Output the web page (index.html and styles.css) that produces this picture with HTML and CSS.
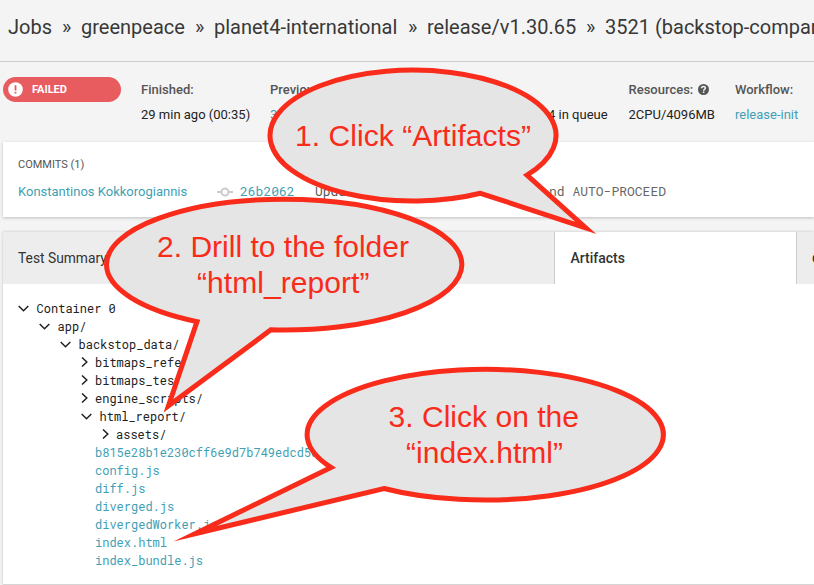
FILE: index.html
```
<!DOCTYPE html>
<html lang="en">
<head>
<meta charset="utf-8">
<title>Job 3521</title>
<link rel="stylesheet" href="styles.css">
</head>
<body>
<nav class="crumbs">
  <span class="c-jobs">Jobs</span><span class="sep">»</span><span class="c-org">greenpeace</span><span class="sep">»</span><span class="c-repo">planet4-international</span><span class="sep">»</span><span class="c-branch">release/v1.30.65</span><span class="sep">»</span><span class="c-build">3521 (backstop-compare)</span>
</nav>
<section class="summary">
  <div class="badge">
    <svg width="15" height="15" viewBox="0 0 15 15"><circle cx="7.5" cy="7.5" r="7.3" fill="#fff"/><path d="M7.5 3.2v5.2M7.5 9.7v1.8" stroke="#e85c60" stroke-width="1.8"/></svg>
    <span>FAILED</span>
  </div>
  <dl class="info finished"><dt>Finished:</dt><dd>29 min ago (00:35)</dd></dl>
  <dl class="info previous"><dt>Previous:</dt><dd class="link">3517</dd></dl>
  <dl class="info queue"><dt>&nbsp;</dt><dd>4 in queue</dd></dl>
  <dl class="info resources"><dt>Resources: <svg width="11" height="11" viewBox="0 0 11 11"><circle cx="5.5" cy="5.5" r="5.5" fill="#555"/><path d="M3.5 4.2C3.5 1.8 7.4 1.9 7.4 4.1C7.4 5.4 5.6 5.3 5.6 6.7M5.6 7.6v1.5" fill="none" stroke="#f4f4f4" stroke-width="1.5"/></svg></dt><dd>2CPU/4096MB</dd></dl>
  <dl class="info workflow"><dt>Workflow:</dt><dd class="link">release-init</dd></dl>
</section>
<section class="commits">
  <h2>COMMITS (1)</h2>
  <div class="commit">
    <span class="author link">Konstantinos Kokkorogiannis</span>
    <svg width="16" height="10" viewBox="0 0 16 10" fill="none" stroke="#ccc" stroke-width="2"><circle cx="8" cy="5" r="3.5"/><path d="M0 5h4.6M11.4 5H16"/></svg>
    <span class="sha link">26b2062</span>
    <span class="msg">Update release</span>
    <span class="msg-end">nd AUTO-PROCEED</span>
  </div>
</section>
<section class="panel">
  <div class="tabs">
    <div class="tab first">Test Summary</div>
    <div class="tab active">Artifacts</div>
    <div class="tab last">Configuration</div>
  </div>
  <div class="tree">
    <div class="row l0"><svg class="down" viewBox="0 0 11 7"><path d="M.7 1L5.5 5.8L10.3 1"/></svg>Container 0</div>
    <div class="row l1"><svg class="down" viewBox="0 0 11 7"><path d="M.7 1L5.5 5.8L10.3 1"/></svg>app/</div>
    <div class="row l2"><svg class="down" viewBox="0 0 11 7"><path d="M.7 1L5.5 5.8L10.3 1"/></svg>backstop_data/</div>
    <div class="row l3"><svg class="right" viewBox="0 0 7 10"><path d="M1 .5L5.8 5L1 9.5"/></svg>bitmaps_reference/</div>
    <div class="row l3"><svg class="right" viewBox="0 0 7 10"><path d="M1 .5L5.8 5L1 9.5"/></svg>bitmaps_test/</div>
    <div class="row l3"><svg class="right" viewBox="0 0 7 10"><path d="M1 .5L5.8 5L1 9.5"/></svg>engine_scripts/</div>
    <div class="row l3o"><svg class="down" viewBox="0 0 11 7"><path d="M.7 1L5.5 5.8L10.3 1"/></svg>html_report/</div>
    <div class="row l4"><svg class="right" viewBox="0 0 7 10"><path d="M1 .5L5.8 5L1 9.5"/></svg>assets/</div>
    <div class="row file link">b815e28b1e230cff6e9d7b749edcd58a.png</div>
    <div class="row file link">config.js</div>
    <div class="row file link">diff.js</div>
    <div class="row file link">diverged.js</div>
    <div class="row file link">divergedWorker.js</div>
    <div class="row file link">index.html</div>
    <div class="row file link">index_bundle.js</div>
  </div>
</section>
<svg class="callouts" width="814" height="585" viewBox="0 0 814 585">
  <g class="bubble">
    <path d="M527 175.1A143 65.5 0 1 0 480.5 193.3L585.8 227.9Z"/>
    <path d="M197 321.6A177.7 65.4 0 0 1 106.5 264.6A177.7 65.4 0 0 1 461.9 264.6A177.7 65.4 0 0 1 270.8 329.8L168.5 405.8Z"/>
    <path d="M331 467.4A178.1 65.4 0 1 1 384 488.5L195 533.7Z"/>
  </g>
  <g class="note">
    <text x="295" y="146" textLength="236">1. Click “Artifacts”</text>
    <text x="157" y="257" textLength="252">2. Drill to the folder</text>
    <text x="197" y="293" textLength="172.5">“html_report”</text>
    <text x="388.5" y="427" textLength="190.5">3. Click on the</text>
    <text x="406" y="463" textLength="157">“index.html”</text>
  </g>
</svg>
</body>
</html>
```
FILE: styles.css
```
* { box-sizing: border-box; margin: 0; padding: 0; }
body {
  width: 814px; height: 585px; overflow: hidden; position: relative;
  background: #f4f4f4; color: #222;
  font: 13px/18px Roboto, "Liberation Sans", sans-serif;
}
.link { color: #3f9fb5; }
svg { flex: none; }

.crumbs {
  display: flex; height: 62px; padding: 0 0 7px 8px; align-items: center;
  border-bottom: 1px solid #ccc; white-space: nowrap;
  font-size: 20px; color: #383838;
}
.crumbs span { flex: none; }
.crumbs .sep { width: 9px; margin: 0 10px; }
.c-jobs { width: 44px; }
.c-org { width: 104px; }
.c-repo { width: 184px; }
.c-branch { width: 149px; }

.summary { display: flex; height: 80px; padding: 15px 0 0 3px; white-space: nowrap; }
.badge {
  display: flex; align-items: center; width: 118px; height: 25px; margin-right: 20px;
  padding-left: 5px; gap: 9px; border-radius: 13px; background: #e85c60;
  color: #fff; font-size: 11px; font-weight: 700;
}
.info { flex: none; padding-top: 4px; }
.info dt { height: 25px; color: #555; font-weight: 500; }
.info dt svg { vertical-align: -1px; margin-left: 1px; }
.finished { width: 129px; }
.previous { width: 278px; }
.queue { width: 80.5px; }
.resources { width: 106.5px; }

.commits {
  height: 75px; margin-left: 3px; padding: 14px 0 0 15px;
  background: #fff; box-shadow: 0 1px 3px rgba(0,0,0,.22);
}
.commits h2 { font-size: 11px; line-height: 18px; font-weight: 400; color: #555; }
.commit { display: flex; align-items: center; margin-top: 9px; white-space: nowrap; }
.commit span { flex: none; }
.author { width: 199px; }
.sha, .msg, .msg-end { font-family: "Roboto Mono", "DejaVu Sans Mono", monospace; font-size: 13px; margin-top: -2px; }
.sha { width: 75px; margin-left: 7px; }
.msg { width: 234px; color: #555; }
.msg-end { color: #666; }

.panel {
  height: 353px; margin: 15px 0 0 3px; background: #fff;
  border-bottom: 1px solid #d5d5d5; box-shadow: 0 0 3px rgba(0,0,0,.2);
}
.tabs { display: flex; height: 52px; overflow: hidden; font-size: 13.5px; line-height: 52px; background: #ededed; }
.tab { flex: none; padding-left: 15px; color: #333; }
.first { width: 551px; font-size: 13.8px; }
.active { width: 243px; padding-left: 15.5px; border: solid #ccc; border-width: 0 1px; background: #fff; font-weight: 500; font-size: 14px; }
.last { width: 120px; font-weight: 500; }

.tree { padding-top: 15px; font-family: "Roboto Mono", "DejaVu Sans Mono", monospace; font-size: 12px; }
.row { display: flex; height: 18px; align-items: center; white-space: nowrap; }
.row svg { fill: none; stroke: #222; stroke-width: 1.5; }
.down { width: 11px; height: 7px; margin-right: 7.6px; }
.right { width: 7px; height: 10px; margin-right: 7px; }
.l0 { padding-left: 15px; }
.l1 { padding-left: 36px; }
.l2 { padding-left: 57px; }
.l3 { padding-left: 78px; }
.l3o { padding-left: 78px; }
.l4 { padding-left: 99px; }
.file { padding-left: 92px; }

.callouts { position: absolute; left: 0; top: 0; }
.bubble { fill: #e5e5e5; stroke: #f92b1b; stroke-width: 5; stroke-miterlimit: 20; }
.note { fill: #f92b1b; font: 30px "Liberation Sans", Arial, sans-serif; }
```
